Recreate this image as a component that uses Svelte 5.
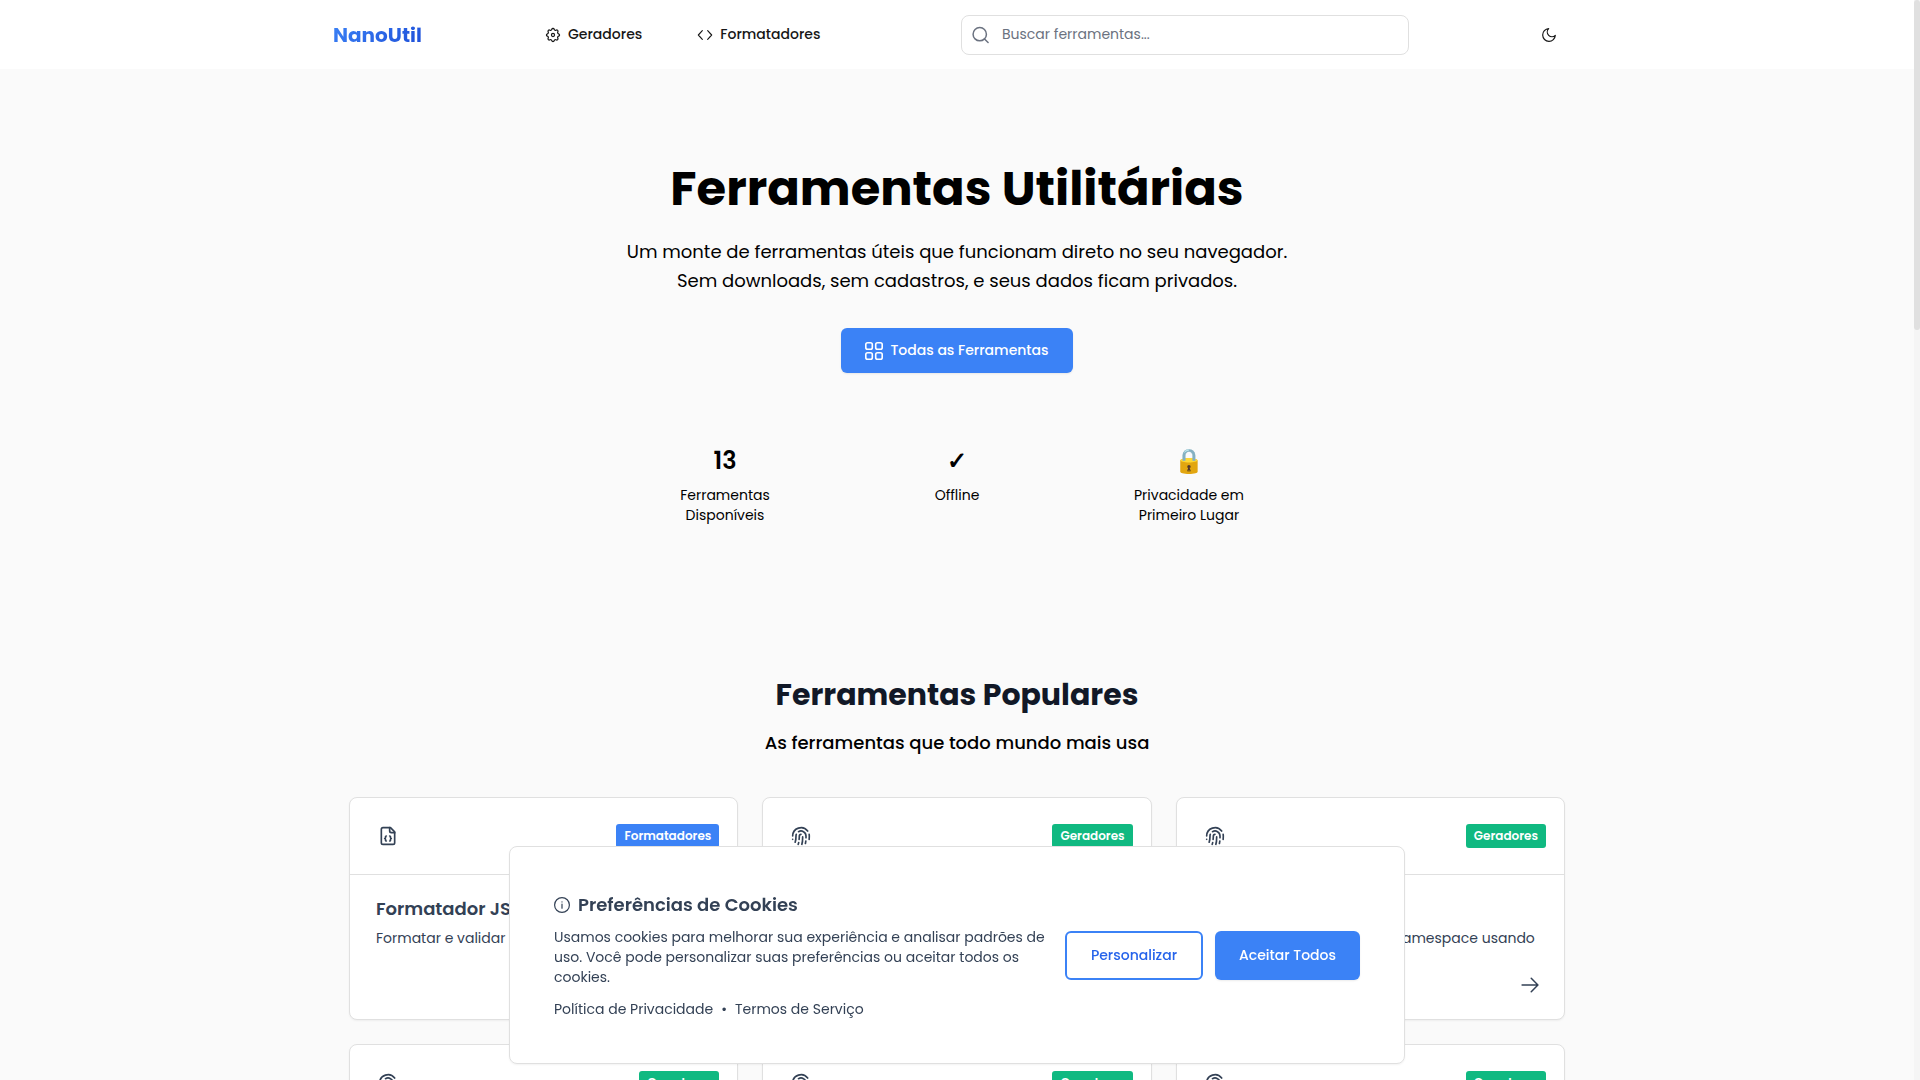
<script lang="ts">
  type Tool = {
    name: string;
    description: string;
    category: 'Formatadores' | 'Geradores';
    icon: 'json' | 'fingerprint';
  };

  const tools: Tool[] = [
    {
      name: 'Formatador JSON',
      description: 'Formatar e validar dados JSON',
      category: 'Formatadores',
      icon: 'json'
    },
    {
      name: 'Gerador UUID v4',
      description: 'Gerar UUIDs aleatórios',
      category: 'Geradores',
      icon: 'fingerprint'
    },
    {
      name: 'Gerador UUID v5',
      description: 'Gerar UUIDs a partir de um namespace usando',
      category: 'Geradores',
      icon: 'fingerprint'
    },
    {
      name: 'Gerador UUID v1',
      description: 'Gerar UUIDs baseados em tempo',
      category: 'Geradores',
      icon: 'fingerprint'
    },
    {
      name: 'Gerador UUID v3',
      description: 'Gerar UUIDs com MD5',
      category: 'Geradores',
      icon: 'fingerprint'
    },
    {
      name: 'Gerador UUID v7',
      description: 'Gerar UUIDs ordenáveis',
      category: 'Geradores',
      icon: 'fingerprint'
    }
  ];

  const stats = [
    { value: '13', label: 'Ferramentas Disponíveis' },
    { value: '✓', label: 'Offline' },
    { value: '🔒', label: 'Privacidade em Primeiro Lugar' }
  ];

  let query = '';
  let showCookies = true;

  const closeCookies = () => {
    showCookies = false;
  };
</script>

<div class="shell">
  <div class="page">
    <header class="header">
      <div class="header-inner">
        <a href="/" class="logo">NanoUtil</a>
        <nav class="nav">
          <a href="/geradores">
            <svg class="icon icon-sm" viewBox="1 1 22 22" stroke-width="1.7">
              <path d="M10.325 4.317c.426-1.756 2.924-1.756 3.35 0a1.724 1.724 0 0 0 2.573 1.066c1.543-.94 3.31.826 2.37 2.37a1.724 1.724 0 0 0 1.065 2.572c1.756.426 1.756 2.924 0 3.35a1.724 1.724 0 0 0-1.066 2.573c.94 1.543-.826 3.31-2.37 2.37a1.724 1.724 0 0 0-2.572 1.065c-.426 1.756-2.924 1.756-3.35 0a1.724 1.724 0 0 0-2.573-1.066c-1.543.94-3.31-.826-2.37-2.37a1.724 1.724 0 0 0-1.065-2.572c-1.756-.426-1.756-2.924 0-3.35a1.724 1.724 0 0 0 1.066-2.573c-.94-1.543.826-3.31 2.37-2.37 1 .608 2.296.07 2.572-1.065z" />
              <circle cx="12" cy="12" r="2.1" />
            </svg>
            Geradores
          </a>
          <a href="/formatadores">
            <svg class="icon icon-sm" viewBox="0 0 24 24" stroke-width="1.7">
              <path d="m16 18.500 6-6.500-6-6.500M8 5.500l-6 6.500 6 6.500" />
            </svg>
            Formatadores
          </a>
        </nav>
        <label class="search">
          <svg class="icon" viewBox="0 0 24 24" stroke-width="1.8">
            <circle cx="10.500" cy="11" r="8" />
            <path d="m20.500 21-4.3-4.3" />
          </svg>
          <input type="search" bind:value={query} placeholder="Buscar ferramentas..." aria-label="Buscar ferramentas" />
        </label>
        <button class="theme" aria-label="Alternar tema">
          <svg class="icon icon-sm" viewBox="0 0 24 24" stroke-width="1.8">
            <path d="M11.500 2.500a6.500 6.500 0 0 0 10 10 9.500 9.500 0 1 1-10-10Z" />
          </svg>
        </button>
      </div>
    </header>

    <main>
      <section class="hero">
        <h1>Ferramentas Utilitárias</h1>
        <p class="lead">
          Um monte de ferramentas úteis que funcionam direto no seu navegador.<br />
          Sem downloads, sem cadastros, e seus dados ficam privados.
        </p>
        <a href="/ferramentas" class="btn btn-primary btn-hero">
          <svg class="icon icon-grid" viewBox="1 1 18 18" stroke-width="1.6">
            <rect x="1.8" y="1.8" width="6.5" height="6.5" rx="1.8" />
            <rect x="11.7" y="1.8" width="6.5" height="6.5" rx="1.8" />
            <rect x="1.8" y="11.7" width="6.5" height="6.5" rx="1.8" />
            <rect x="11.7" y="11.7" width="6.5" height="6.5" rx="1.8" />
          </svg>
          Todas as Ferramentas
        </a>
        <div class="stats">
          {#each stats as stat}
            <div class="stat">
              <div class="stat-value">{stat.value}</div>
              <div class="stat-label">{stat.label}</div>
            </div>
          {/each}
        </div>
      </section>

      <section class="popular">
        <h2>Ferramentas Populares</h2>
        <p class="popular-lead">As ferramentas que todo mundo mais usa</p>
        <div class="grid">
          {#each tools as tool}
            <article class="card">
              <div class="card-head">
                <svg class="icon" viewBox="0 0 24 24" stroke-width="2">
                  {#if tool.icon === 'json'}
                    <path d="M15 2H6a2 2 0 0 0-2 2v16a2 2 0 0 0 2 2h12a2 2 0 0 0 2-2V7Z" />
                    <path d="M14 2v4a2 2 0 0 0 2 2h4" />
                    <path d="M10 12a1 1 0 0 0-1 1v1a1 1 0 0 1-1 1 1 1 0 0 1 1 1v1a1 1 0 0 0 1 1" />
                    <path d="M14 18a1 1 0 0 0 1-1v-1a1 1 0 0 1 1-1 1 1 0 0 1-1-1v-1a1 1 0 0 0-1-1" />
                  {:else}
                    <path d="M12 10a2 2 0 0 0-2 2c0 1.02-.1 2.51-.26 4" />
                    <path d="M14 13.12c0 2.38 0 6.38-1 8.88" />
                    <path d="M17.29 21.02c.12-.6.43-2.3.5-3.02" />
                    <path d="M2 12a10 10 0 0 1 18-6" />
                    <path d="M2 16h.01" />
                    <path d="M21.8 16c.2-2 .131-5.354 0-6" />
                    <path d="M5 19.5C5.5 18 6 15 6 12a6 6 0 0 1 .34-2" />
                    <path d="M8.65 22c.21-.66.45-1.32.57-2" />
                    <path d="M9 6.8a6 6 0 0 1 9 5.2v2" />
                  {/if}
                </svg>
                <span class="badge" class:green={tool.category === 'Geradores'}>{tool.category}</span>
              </div>
              <div class="card-body">
                <h3>{tool.name}</h3>
                <p>{tool.description}</p>
                <a href="/ferramentas" class="card-link" aria-label={tool.name}>
                  <svg class="icon" viewBox="0 0 24 24" stroke-width="1.8">
                    <path d="M13.5 4 21.5 12l-8 8M21 12H2.5" />
                  </svg>
                </a>
              </div>
            </article>
          {/each}
        </div>
      </section>
    </main>
  </div>

  <div class="track"><div class="thumb"></div></div>

  {#if showCookies}
    <div class="cookies" role="dialog" aria-label="Preferências de Cookies">
      <div class="cookies-text">
        <h3>
          <svg class="icon icon-sm" viewBox="0 0 16 16" stroke-width="1.2">
            <circle cx="8" cy="8" r="7.4" />
            <path d="M8 7.2v4M8 4.8v.2" />
          </svg>
          Preferências de Cookies
        </h3>
        <p>
          Usamos cookies para melhorar sua experiência e analisar padrões de uso. Você pode
          personalizar suas preferências ou aceitar todos os cookies.
        </p>
        <div class="cookies-links">
          <a href="/privacidade">Política de Privacidade</a>
          <span>•</span>
          <a href="/termos">Termos de Serviço</a>
        </div>
      </div>
      <div class="cookies-actions">
        <button class="btn btn-outline">Personalizar</button>
        <button class="btn btn-primary" on:click={closeCookies}>Aceitar Todos</button>
      </div>
    </div>
  {/if}
</div>

<style>
  :global(body) {
    background: #fafafa;
  }

  .shell {
    display: flex;
    height: 100vh;
    color: #000;
    font-family: Poppins, sans-serif;
    font-size: 14px;
    line-height: 20px;
  }

  .shell :global(*) {
    box-sizing: border-box;
  }

  .page {
    flex: 1;
    min-width: 0;
    overflow-y: auto;
    scrollbar-width: none;
  }

  .track {
    flex: none;
    width: 6px;
    background: #f5f5f5;
  }

  .thumb {
    height: 30.6%;
    border-radius: 3px;
    background: #e0e0e0;
  }

  h1,
  h2,
  h3,
  p {
    margin: 0;
  }

  a {
    color: inherit;
    text-decoration: none;
  }

  button,
  input {
    font: inherit;
  }

  .icon {
    flex: none;
    width: 20px;
    height: 20px;
    fill: none;
    stroke: currentColor;
    stroke-linecap: round;
    stroke-linejoin: round;
  }

  .icon-sm {
    width: 16px;
    height: 16px;
  }

  .icon-grid {
    width: 18px;
    height: 18px;
  }

  .header {
    background: #fff;
  }

  .header-inner {
    display: grid;
    grid-template-columns: 212px 1fr 448px 172px;
    align-items: center;
    max-width: 1280px;
    height: 69px;
    margin: 0 auto;
    padding: 0 16px;
  }

  .logo {
    justify-self: start;
    background: linear-gradient(135deg, #3b82f6, #1d4ed8);
    background-clip: text;
    color: transparent;
    font-size: 20px;
    font-weight: 700;
    line-height: 28px;
  }

  .nav {
    display: flex;
    gap: 55px;
    color: #171717;
    font-weight: 500;
    line-height: 21px;
  }

  .nav a {
    display: flex;
    align-items: center;
    gap: 7px;
  }

  .search {
    display: flex;
    align-items: center;
    gap: 11px;
    height: 40px;
    padding: 0 9px;
    border: 1px solid #e0e0e0;
    border-radius: 8px;
    color: #6b7280;
  }

  .search input {
    flex: 1;
    min-width: 0;
    padding: 0 0 2px;
    border: 0;
    outline: 0;
    background: none;
    color: #171717;
  }

  .search input::placeholder {
    color: #6b7280;
    opacity: 1;
  }

  .theme {
    display: grid;
    place-items: center;
    justify-self: end;
    width: 32px;
    height: 32px;
    margin-right: 16px;
    padding: 0;
    border: 0;
    background: none;
    color: #171717;
  }

  .hero {
    display: flex;
    flex-direction: column;
    align-items: center;
    padding: 90px 16px 134px;
    text-align: center;
  }

  h1 {
    font-size: 48px;
    font-weight: 700;
    line-height: 60px;
  }

  .lead {
    margin-top: 18px;
    font-size: 18px;
    line-height: 29px;
  }

  .btn {
    display: flex;
    align-items: center;
    justify-content: center;
    padding: 14px 24px;
    border: 0;
    border-radius: 6px;
    font-weight: 500;
    line-height: 21px;
    box-shadow: 0 1px 2px rgba(0, 0, 0, 0.08);
  }

  .btn-primary {
    background: #3b82f6;
    color: #fff;
  }

  .btn-outline {
    padding: 12px 24px;
    border: 2px solid #3b82f6;
    background: #fff;
    color: #2563eb;
    box-shadow: none;
  }

  .btn-hero {
    gap: 7px;
    margin-top: 33px;
    padding: 12px 24px;
  }

  .stats {
    display: grid;
    grid-template-columns: repeat(3, 136px);
    gap: 96px;
    margin-top: 72px;
  }

  .stat-value {
    font-size: 24px;
    font-weight: 600;
    line-height: 32px;
  }

  .stat-label {
    margin-top: 8px;
  }

  .popular {
    max-width: 1280px;
    margin: 0 auto;
    padding: 16px 32px;
    text-align: center;
  }

  h2 {
    color: #111827;
    font-size: 30px;
    font-weight: 700;
    line-height: 40px;
  }

  .popular-lead {
    margin-top: 14px;
    font-size: 18px;
    font-weight: 500;
    line-height: 28px;
  }

  .grid {
    display: grid;
    grid-template-columns: repeat(3, 1fr);
    gap: 24px;
    margin-top: 40px;
    text-align: left;
  }

  .card {
    border: 1px solid #e0e0e0;
    border-radius: 8px;
    background: #fff;
    color: #334155;
    box-shadow: 0 1px 2px rgba(0, 0, 0, 0.05);
  }

  .card-head {
    display: flex;
    align-items: center;
    justify-content: space-between;
    height: 77px;
    padding: 0 18px 0 28px;
    border-bottom: 1px solid #e0e0e0;
  }

  .badge {
    padding: 0 8px;
    border-radius: 3px;
    background: #3b82f6;
    color: #fff;
    font-size: 12px;
    font-weight: 600;
    line-height: 24px;
  }

  .badge.green {
    background: #10b981;
  }

  .card-body {
    display: flex;
    flex-direction: column;
    padding: 20px 24px 24px 26px;
  }

  .card-body h3 {
    font-size: 18px;
    font-weight: 600;
    line-height: 28px;
  }

  .card-body p {
    margin-top: 5px;
  }

  .card-link {
    display: flex;
    align-self: flex-end;
    margin-top: 27px;
  }

  .cookies {
    position: fixed;
    right: 6px;
    bottom: 16px;
    left: 0;
    display: flex;
    align-items: center;
    gap: 20px;
    max-width: 896px;
    margin: 0 auto;
    padding: 44px;
    border: 1px solid #e0e0e0;
    border-radius: 8px;
    background: #fff;
    color: #334155;
    box-shadow: 0 1px 2px rgba(0, 0, 0, 0.05);
  }

  .cookies-text {
    flex: 1;
  }

  .cookies h3 {
    display: flex;
    align-items: center;
    gap: 8px;
    font-size: 18px;
    font-weight: 600;
    line-height: 28px;
  }

  .cookies p {
    margin-top: 8px;
  }

  .cookies-links {
    display: flex;
    gap: 8px;
    margin-top: 12px;
  }

  .cookies-actions {
    display: flex;
    gap: 12px;
  }
</style>
